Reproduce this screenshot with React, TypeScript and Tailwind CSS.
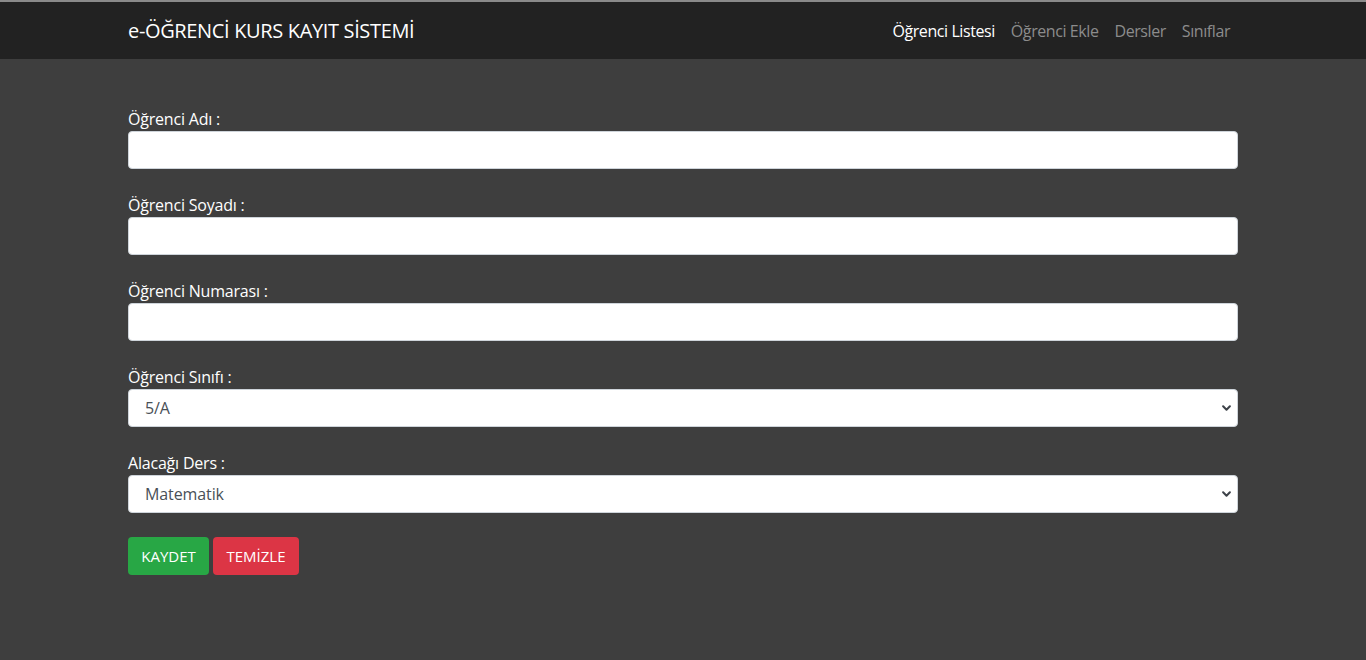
import React from "react";

const Arrow = () => (
  <svg width="9" height="6" viewBox="0 0 16 10" className="pointer-events-none absolute right-[6px] top-1/2 -translate-y-1/2">
    <path d="M2 2 8 8l6-6" fill="none" stroke="#3d4249" strokeWidth="3.6" strokeLinecap="round" strokeLinejoin="round" />
  </svg>
);

function Field({ label, children }: { label: string; children: React.ReactNode }) {
  return (
    <div className="mb-4">
      <label className="block h-8 pt-2 text-base leading-6 tracking-[-0.2px] text-white">{label}</label>
      {children}
    </div>
  );
}

function Input() {
  return <input className="block h-[38px] w-full rounded border border-[#ced4da] bg-white px-3 text-base text-[#495057] outline-none" />;
}

function Select({ value }: { value: string }) {
  return (
    <div className="relative h-[38px] w-full rounded border border-[#ced4da] bg-white">
      <div className="flex h-full items-center pl-4 text-base tracking-[-0.1px] text-[#495057]">{value}</div>
      <Arrow />
    </div>
  );
}

export default function App() {
  return (
    <div className="min-h-[660px] bg-[#3e3e3e]" style={{ fontFamily: '"Open Sans", "Noto Sans", sans-serif' }}>
      <div className="h-[3px] border-t-2 border-[#8a8a8a] bg-[#222]" />
      <nav className="h-14 bg-[#222222]">
        <div className="mx-auto flex h-full w-[1140px] items-center justify-between px-[15px]">
          <div className="text-[20px] tracking-[-0.35px] text-white">e-ÖĞRENCİ KURS KAYIT SİSTEMİ</div>
          <div className="flex items-center text-[16px] tracking-[-0.42px]">
            <a className="px-2 text-white">Öğrenci Listesi</a>
            <a className="px-2 text-[#8c8c8c]">Öğrenci Ekle</a>
            <a className="px-2 text-[#8c8c8c]">Dersler</a>
            <a className="px-2 text-[#8c8c8c]">Sınıflar</a>
          </div>
        </div>
      </nav>
      <main className="mx-auto w-[1140px] px-[15px] pt-10">
        <Field label="Öğrenci Adı :"><Input /></Field>
        <Field label="Öğrenci Soyadı :"><Input /></Field>
        <Field label="Öğrenci Numarası :"><Input /></Field>
        <Field label="Öğrenci Sınıfı :"><Select value="5/A" /></Field>
        <Field label="Alacağı Ders :"><Select value="Matematik" /></Field>
        <div className="mt-6 flex gap-1">
          <button className="h-[38px] w-[81px] rounded bg-[#28a745] text-[15px] text-white">KAYDET</button>
          <button className="h-[38px] w-[86px] rounded bg-[#dc3545] text-[15px] text-white">TEMİZLE</button>
        </div>
      </main>
    </div>
  );
}
